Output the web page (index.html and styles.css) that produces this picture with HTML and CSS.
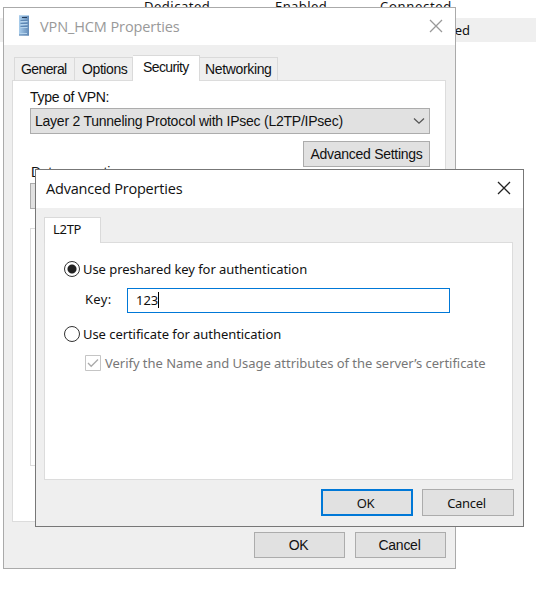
FILE: index.html
```html
<!DOCTYPE html>
<html lang="en">
<head>
<meta charset="utf-8">
<title>VPN_HCM Properties</title>
<link rel="stylesheet" href="styles.css">
</head>
<body>
<div class="list">
  <div class="row first"><span>Dedicated</span><span>Enabled</span><span>Connected</span></div>
  <div class="row selected"><span>Connected</span></div>
</div>

<section class="window properties">
  <header class="titlebar">
    <svg class="server" width="12" height="21" viewBox="0 0 12 21">
      <defs><linearGradient id="metal" x2="1"><stop stop-color="#a9cdec"/><stop offset="1" stop-color="#638bb8"/></linearGradient></defs>
      <path d="M1 .5h10v20H1z" fill="url(#metal)"/>
      <path d="M1 .5h10" stroke="#b9d4eb"/>
      <path d="M4 2.5h5" stroke="#243c5a"/>
      <path d="M2.5 5.5h7M2.5 8.5h7M2.5 11.5h7" stroke="#5f88b5"/>
      <path d="M2.5 6.5h7M2.5 9.5h7M2.5 12.5h7M2 18.5h7" stroke="#b5d3ec"/>
      <path d="M1 20h10" stroke="#5f86b2"/>
    </svg>
    <h1>VPN_HCM Properties</h1>
    <svg class="close" width="14" height="14" viewBox="0 0 14 14"><path d="M1 1l12 12M13 1L1 13"/></svg>
  </header>
  <nav class="tabs">
    <span class="tab general">General</span><span class="tab options">Options</span><span class="tab active security">Security</span><span class="tab networking">Networking</span>
  </nav>
  <div class="panel">
    <label class="type">Type of VPN:</label>
    <div class="select"><span>Layer 2 Tunneling Protocol with IPsec (L2TP/IPsec)</span>
      <svg width="12" height="8" viewBox="0 0 12 8"><path d="M1 1.5l5 4.7 5-4.7"/></svg>
    </div>
    <button class="advanced">Advanced Settings</button>
    <label class="encryption">Data encryption:</label>
    <div class="select second"></div>
    <div class="group"></div>
  </div>
  <footer class="actions"><button class="ok">OK</button><button class="cancel">Cancel</button></footer>
</section>

<section class="window dialog">
  <header class="titlebar">
    <h2>Advanced Properties</h2>
    <svg class="close" width="14" height="14" viewBox="0 0 14 14"><path d="M1 1l12 12M13 1L1 13"/></svg>
  </header>
  <nav class="tabs"><span class="tab active">L2TP</span></nav>
  <div class="panel">
    <div class="option preshared"><i class="radio checked"></i><span>Use preshared key for authentication</span></div>
    <div class="key"><span class="name">Key:</span><div class="field"><span>123</span><i class="caret"></i></div></div>
    <div class="option certificate"><i class="radio"></i><span>Use certificate for authentication</span></div>
    <div class="verify">
      <svg width="16" height="16" viewBox="0 0 16 16"><path class="box" d="M.5.5h15v15H.5z"/><path class="tick" d="M3 8l3.2 3.3L13 4.5"/></svg>
      <span>Verify the Name and Usage attributes of the server’s certificate</span>
    </div>
  </div>
  <footer class="actions"><button class="ok default">OK</button><button class="cancel">Cancel</button></footer>
</section>
</body>
</html>
```
FILE: styles.css
```css
* { box-sizing: border-box; }
body { margin: 0; width: 536px; height: 592px; position: relative; overflow: hidden; background: #fff; color: #111; font: 14px/16px "Liberation Sans", sans-serif; letter-spacing: -.27px; white-space: nowrap; }
h1, h2 { margin: 0; font: 14.5px/20px "Open Sans", sans-serif; }
button { display: block; padding: 0; height: 26px; border: 1px solid #acacac; background: #e1e1e1; color: #111; font: inherit; letter-spacing: inherit; }
svg { display: block; fill: none; flex: none; }

.list { font: 13px/16px "Noto Sans", sans-serif; letter-spacing: 0; }
.row { height: 24px; display: flex; }
.row.first { height: 18px; }
.row.first span { margin-top: -2px; height: 16px; }
.row.first span:nth-child(1) { margin-left: 144px; width: 131px; letter-spacing: .5px; }
.row.first span:nth-child(2) { width: 105px; letter-spacing: .4px; }
.row.first span:nth-child(3) { letter-spacing: .7px; }
.row.selected { background: #efefef; padding: 4px 66px 0 0; justify-content: flex-end; }

.window { position: absolute; display: flex; flex-direction: column; background: #efefef; border: 1px solid #aaa; }
.titlebar { display: flex; background: #fff; flex: none; }
.titlebar .close { margin-left: auto; stroke: #222; stroke-width: 1.3; }
.tabs { display: flex; align-items: flex-end; height: 26px; flex: none; position: relative; z-index: 1; }
.tab { height: 24px; border: 1px solid #dadada; border-left: 0; border-bottom: 0; padding-top: 3px; }
.tab.active { height: 26px; background: #fff; }
.panel { background: #fff; border: 1px solid #dcdcdc; flex: none; }
.actions { display: flex; justify-content: flex-end; }

.properties { left: 3px; top: 7px; width: 453px; height: 562px; }
.properties .titlebar { height: 37px; padding: 0 12px 0 14px; color: #999; }
.server { margin-top: 7px; }
.properties h1 { margin: 9px 0 0 10px; letter-spacing: -.1px; }
.properties .close { margin-top: 11px; stroke: #999; }
.properties .tabs { margin: 10px 0 0 10px; }
.properties .general { width: 61px; border-left: 1px solid #dadada; padding-left: 6px; letter-spacing: -.6px; }
.properties .options { width: 58px; padding-left: 7px; letter-spacing: -.4px; }
.properties .security { width: 67px; padding-left: 10px; letter-spacing: -.6px; }
.properties .networking { width: 78px; padding-left: 5px; letter-spacing: -.35px; }
.properties .panel { margin: -1px 0 0 8px; width: 434px; height: 442px; padding: 8px 15px 0 17px; }
.type, .encryption { display: block; }
.encryption { padding-left: 1px; }
.select { display: flex; align-items: center; justify-content: space-between; height: 26px; margin-top: 3px; border: 1px solid #acacac; background: #e1e1e1; padding: 0 4px; letter-spacing: -.24px; }
.select svg { stroke: #555; stroke-width: 1.3; }
.advanced { width: 127px; margin: 7px 0 0 auto; }
.encryption { margin-top: -3px; }
.select.second { margin-top: 3px; }
.group { height: 238px; margin-top: 19px; border: 1px solid #dcdcdc; }
.properties .actions { gap: 10px; padding: 10px 9px 0 0; }
.properties .actions button { width: 91px; padding-right: 2px; }

.dialog { left: 35px; top: 169px; width: 489px; height: 358px; border-color: #777; font: 13px/16px "Noto Sans", sans-serif; letter-spacing: -.035px; }
.dialog .titlebar { height: 38px; padding: 0 12px 0 10px; }
.dialog h2 { margin-top: 9px; letter-spacing: -.2px; color: #111; }
.dialog .close { margin-top: 11px; }
.dialog .tabs { margin: 9px 0 0 8px; }
.dialog .tab { width: 57px; border-left: 1px solid #dadada; padding: 3px 0 0 8px; letter-spacing: -.3px; }
.dialog .panel { margin: -1px 0 0 8px; width: 469px; height: 238px; padding: 17px 0 0 19px; }
.option { display: flex; align-items: center; height: 18px; gap: 3px; letter-spacing: -.06px; }
.radio { width: 16px; height: 16px; border: 1px solid #333; border-radius: 50%; background: #fff; }
.radio.checked { background: radial-gradient(circle, #222 4px, #fff 5px); }
.key { display: flex; align-items: center; height: 26px; margin-top: 9px; padding-left: 21px; }
.key .name { width: 42px; margin-top: -2px; letter-spacing: .3px; }
.field { width: 323px; height: 25px; border: 1px solid #0078d7; display: flex; align-items: center; padding-left: 8px; }
.caret { width: 1px; height: 16px; background: #000; }
.certificate { margin-top: 12px; }
.verify { display: flex; align-items: center; gap: 4px; margin: 12px 0 0 21px; color: #777; }
.verify .box { stroke: #c5c5c5; }
.verify .tick { stroke: #aaa; stroke-width: 1.3; }
.dialog .actions { gap: 9px; padding: 9px 9px 0 0; letter-spacing: -.3px; }
.dialog .actions button { width: 92px; height: 27px; padding-right: 3px; }
.dialog .default { border: 2px solid #0078d7; }
```
